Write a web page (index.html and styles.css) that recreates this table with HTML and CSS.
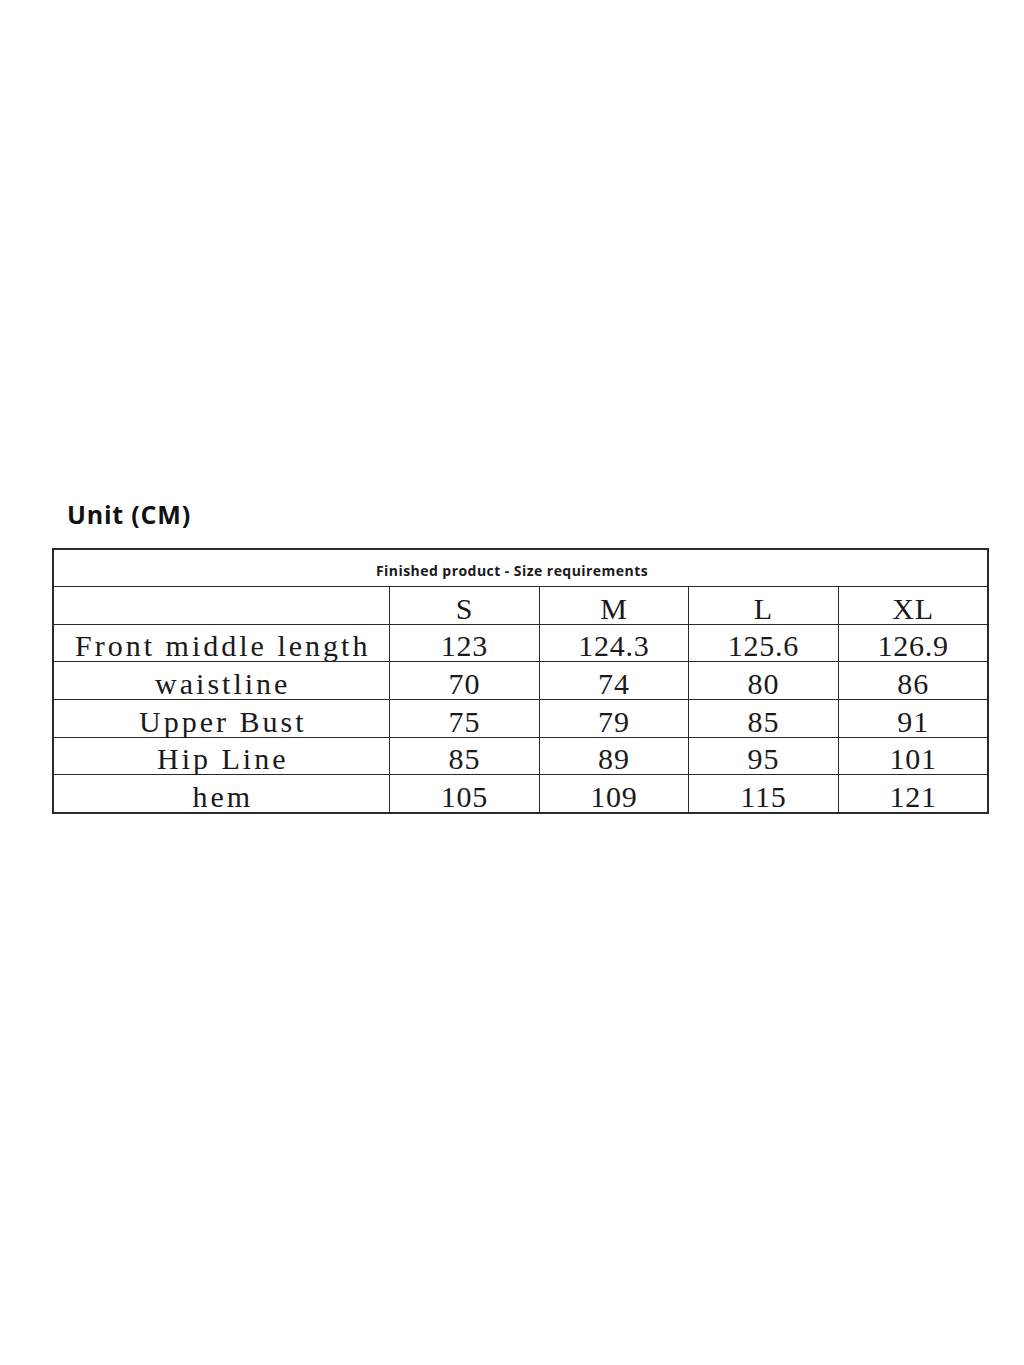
FILE: index.html
```html
<!DOCTYPE html>
<html>
<head>
<meta charset="utf-8">
<link rel="stylesheet" href="styles.css">
</head>
<body>
<div class="page">
  <h1 class="unit">Unit (CM)</h1>
  <table class="size-table">
    <colgroup>
      <col class="c-label"><col class="c-size"><col class="c-size-n"><col class="c-size"><col class="c-size">
    </colgroup>
    <tr class="r-head"><th colspan="5">Finished product - Size requirements</th></tr>
    <tr class="r-a"><td></td><td><span class="num">S</span></td><td><span class="num">M</span></td><td><span class="num">L</span></td><td><span class="num">XL</span></td></tr>
    <tr class="r-b"><td><span class="lbl">Front middle length</span></td><td><span class="num">123</span></td><td><span class="num">124.3</span></td><td><span class="num">125.6</span></td><td><span class="num">126.9</span></td></tr>
    <tr class="r-a"><td><span class="lbl">waistline</span></td><td><span class="num">70</span></td><td><span class="num">74</span></td><td><span class="num">80</span></td><td><span class="num">86</span></td></tr>
    <tr class="r-a"><td><span class="lbl">Upper Bust</span></td><td><span class="num">75</span></td><td><span class="num">79</span></td><td><span class="num">85</span></td><td><span class="num">91</span></td></tr>
    <tr class="r-b"><td><span class="lbl">Hip Line</span></td><td><span class="num">85</span></td><td><span class="num">89</span></td><td><span class="num">95</span></td><td><span class="num">101</span></td></tr>
    <tr class="r-a"><td><span class="lbl">hem</span></td><td><span class="num">105</span></td><td><span class="num">109</span></td><td><span class="num">115</span></td><td><span class="num">121</span></td></tr>
  </table>
</div>
</body>
</html>
```
FILE: styles.css
```css
html, body {
  margin: 0;
  padding: 0;
  background: #ffffff;
}
.page {
  width: 1024px;
  height: 1365px;
  padding: 497px 0 0 52px;
  box-sizing: border-box;
}
.unit {
  margin: 0 0 17px 15px;
  font-family: "Open Sans", "Liberation Sans", sans-serif;
  font-weight: 700;
  font-size: 25px;
  line-height: 34px;
  letter-spacing: 0.8px;
  color: #111;
}
.size-table {
  border-collapse: collapse;
  table-layout: fixed;
  width: 933px;
  border: 2px solid #2a2a2a;
}
.c-label { width: 336px; }
.c-size { width: 150px; }
.c-size-n { width: 149px; }
.size-table th,
.size-table td {
  border: 1px solid #2a2a2a;
  padding: 0;
  text-align: center;
  vertical-align: middle;
  color: #1a1a1a;
}
.r-head th {
  height: 32px;
  font-family: "Open Sans", "Liberation Sans", sans-serif;
  font-weight: 700;
  font-size: 14px;
  letter-spacing: 0.45px;
  padding: 4px 17px 0 0;
}
.r-a td { height: 37px; }
.r-b td { height: 36px; }
.size-table td span {
  display: inline-block;
  font-family: "Liberation Serif", "DejaVu Serif", serif;
  font-size: 30px;
  line-height: 30px;
  padding-top: 6px;
  white-space: pre;
}
.size-table td .lbl { letter-spacing: 3px; margin-right: -3px; }
.size-table td .num { letter-spacing: 0.8px; margin-right: -0.8px; }
```
